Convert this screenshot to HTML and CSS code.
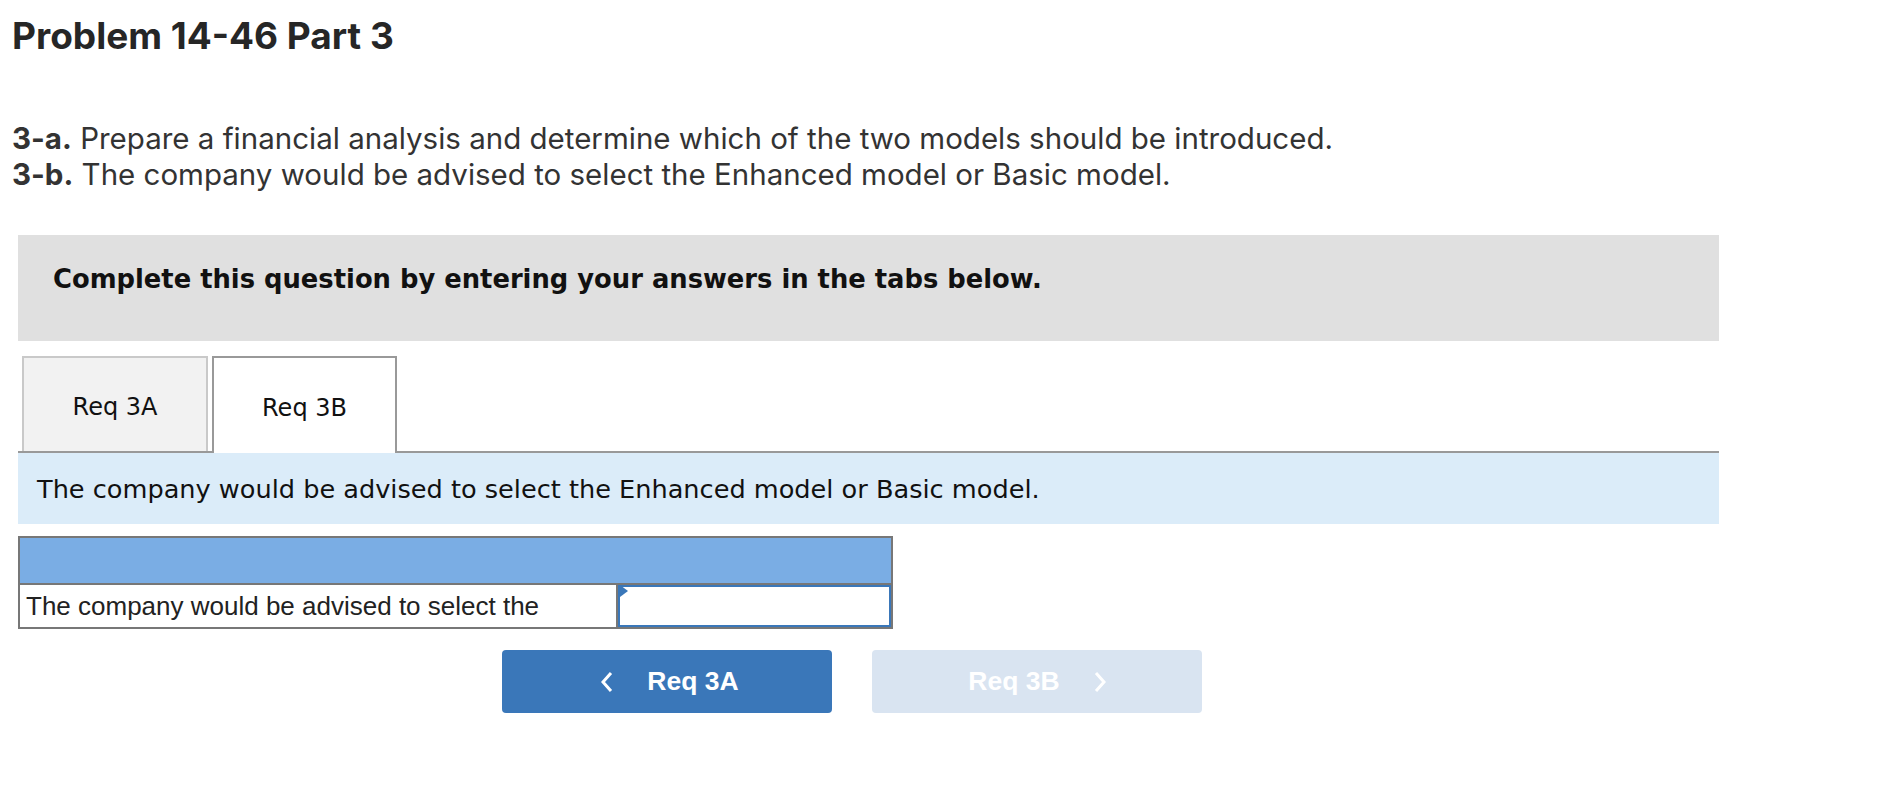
FILE: index.html
```html
<!DOCTYPE html>
<html lang="en">
<head>
  <meta charset="UTF-8" />
  <title>Problem 14-46 Part 3</title>
  <link rel="stylesheet" href="styles.css">
</head>

<body>
  <div class="page">
    <!-- Question header -->
    <h1 class="title">Problem 14-46 Part 3</h1>

    <div class="prompt">
      <p><strong>3-a.</strong> Prepare a financial analysis and determine which of the two models should be introduced.</p>
      <p><strong>3-b.</strong> The company would be advised to select the Enhanced model or Basic model.</p>
    </div>

    <!-- Answer area -->
    <div class="workspace">
      <div class="instructions">Complete this question by entering your answers in the tabs below.</div>

      <div class="tabs">
        <button class="tab">Req 3A</button>
        <button class="tab active">Req 3B</button>
      </div>

      <div class="tab-panel">
        <p>The company would be advised to select the Enhanced model or Basic model.</p>
      </div>

      <table class="answer-table">
        <tr class="head-row">
          <th colspan="2"></th>
        </tr>
        <tr>
          <td class="label-cell">The company would be advised to select the</td>
          <td class="input-cell">
            <span class="marker"></span>
            <input type="text" class="answer-input">
          </td>
        </tr>
      </table>

      <div class="nav">
        <button class="nav-btn prev">
          <svg width="12" height="20" viewBox="0 0 12 20"><polyline points="10,1 2,10 10,19" fill="none" stroke="#fff" stroke-width="3"/></svg>
          <span>Req 3A</span>
        </button>
        <button class="nav-btn next" disabled>
          <span>Req 3B</span>
          <svg width="12" height="20" viewBox="0 0 12 20"><polyline points="2,1 10,10 2,19" fill="none" stroke="#fff" stroke-width="3"/></svg>
        </button>
      </div>
    </div>
  </div>
</body>
</html>
```

FILE: styles.css
```css
body {
  margin: 0;
  background-color: #fff;
  font-family: Inter, "Open Sans", Arial, sans-serif;
  color: #333;
}

.page {
  padding: 0 12px;
}

.title {
  margin: 14px 0 0 0;
  font-size: 37px;
  line-height: 44px;
  font-weight: 700;
  color: #262626;
}

.prompt {
  margin-top: 62px;
}

.prompt p {
  margin: 0;
  font-size: 29.5px;
  line-height: 36px;
  font-weight: 400;
}

.prompt strong {
  font-weight: 700;
  color: #333;
}

.workspace {
  width: 1701px;
  margin: 43px 0 0 6px;
}

.instructions {
  background-color: #e0e0e0;
  padding: 31px 35px 49px;
  font-family: "DejaVu Sans", Verdana, sans-serif;
  font-weight: bold;
  font-size: 25.8px;
  line-height: 26px;
  color: #111;
}

/* Tabs */
.tabs {
  display: flex;
  gap: 4px;
  margin-top: 15px;
  padding-left: 4px;
  border-bottom: 2px solid #999;
}

.tab {
  width: 186px;
  height: 95px;
  padding: 4px 0 0;
  margin: 0;
  border: 2px solid #c9c9c9;
  border-bottom: none;
  background-color: #f2f2f2;
  font-family: "DejaVu Sans", Verdana, sans-serif;
  font-size: 24px;
  color: #111;
  cursor: pointer;
}

.tab.active {
  width: 185px;
  height: 97px;
  margin-bottom: -2px;
  border-color: #999;
  background-color: #fff;
}

.tab-panel {
  background-color: #dbecf9;
  padding: 21px 19px 20px;
}

.tab-panel p {
  margin: 0;
  font-family: "DejaVu Sans", Verdana, sans-serif;
  font-size: 25.6px;
  line-height: 30px;
  color: #111;
}

/* Answer table */
.answer-table {
  margin-top: 12px;
  width: 875px;
  border-collapse: collapse;
  border: 2px solid #777;
  font-family: "Liberation Sans", Arial, sans-serif;
}

.head-row th {
  height: 45px;
  padding: 0;
  background-color: #7aade4;
  border: 2px solid #777;
}

.answer-table td {
  height: 42px;
  padding: 0;
  border: 2px solid #777;
}

.label-cell {
  width: 590px;
  padding-left: 6px !important;
  font-size: 26px;
  color: #222;
}

.input-cell {
  position: relative;
}

.answer-input {
  display: block;
  box-sizing: border-box;
  width: 100%;
  height: 42px;
  margin: 0;
  border: 2px solid #3a77b9;
  outline: none;
  font-family: "Liberation Sans", Arial, sans-serif;
  font-size: 26px;
}

.marker {
  position: absolute;
  top: 0;
  left: 2px;
  width: 0;
  height: 0;
  border-top: 6px solid transparent;
  border-bottom: 6px solid transparent;
  border-left: 8px solid #3a77b9;
}

/* Prev / next */
.nav {
  display: flex;
  gap: 40px;
  margin-top: 21px;
  padding-left: 484px;
}

.nav-btn {
  display: flex;
  align-items: center;
  justify-content: center;
  gap: 34px;
  width: 330px;
  height: 63px;
  border: none;
  border-radius: 4px;
  font-family: "Liberation Sans", Arial, sans-serif;
  font-weight: bold;
  font-size: 26.5px;
  color: #fff;
  cursor: pointer;
}

.nav-btn.prev {
  background-color: #3a77b9;
  padding-left: 12px;
}

.nav-btn.next {
  background-color: #d9e4f1;
  cursor: default;
}
```
